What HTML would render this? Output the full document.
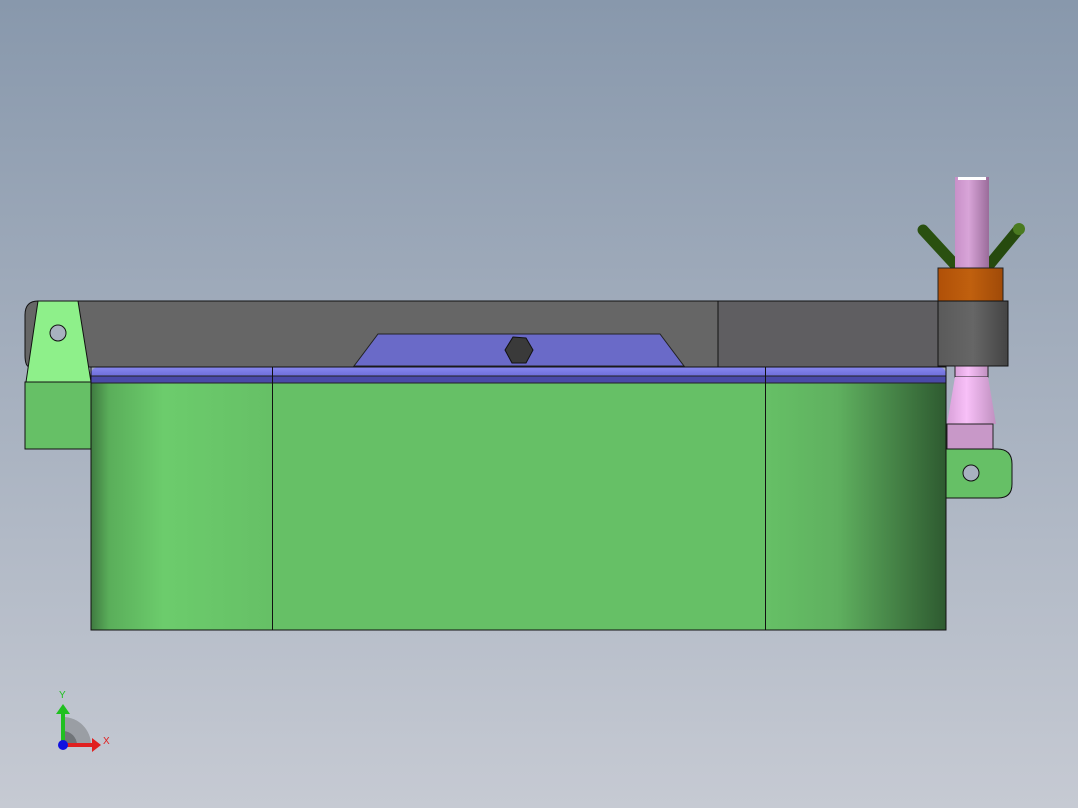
<!DOCTYPE html>
<html><head><style>html,body{margin:0;padding:0}body{width:1078px;height:808px;overflow:hidden}svg{display:block}</style></head><body>
<svg width="1078" height="808" xmlns="http://www.w3.org/2000/svg">
<defs>
<linearGradient id="bg" x1="0" y1="0" x2="0" y2="1"><stop offset="0" stop-color="#8898ac"/><stop offset="1" stop-color="#c6cad3"/></linearGradient>
<linearGradient id="gl" x1="0" x2="1"><stop offset="0" stop-color="#3f7a40"/><stop offset="0.1" stop-color="#5aae5a"/><stop offset="0.4" stop-color="#6ccc6c"/><stop offset="1" stop-color="#66c066"/></linearGradient>
<linearGradient id="gr" x1="0" x2="1"><stop offset="0" stop-color="#66c066"/><stop offset="0.4" stop-color="#5fb05f"/><stop offset="1" stop-color="#2e5a30"/></linearGradient>
<linearGradient id="pk" x1="0" x2="1"><stop offset="0" stop-color="#c890c8"/><stop offset="0.4" stop-color="#d8a4d8"/><stop offset="1" stop-color="#9a6c9a"/></linearGradient>
<linearGradient id="pk2" x1="0" x2="1"><stop offset="0" stop-color="#d8a0d8"/><stop offset="0.4" stop-color="#f8c0f8"/><stop offset="1" stop-color="#c090c0"/></linearGradient>
<linearGradient id="or" x1="0" x2="1"><stop offset="0" stop-color="#b05008"/><stop offset="0.5" stop-color="#c0600e"/><stop offset="1" stop-color="#a04a08"/></linearGradient>
<linearGradient id="cl" x1="0" x2="1"><stop offset="0" stop-color="#5a5a5a"/><stop offset="0.5" stop-color="#666"/><stop offset="1" stop-color="#444"/></linearGradient>
<linearGradient id="bl" x1="0" y1="0" x2="0" y2="1"><stop offset="0" stop-color="#8888f0"/><stop offset="1" stop-color="#5a5ac8"/></linearGradient>
</defs>
<rect width="1078" height="808" fill="url(#bg)"/>
<line x1="923" y1="230" x2="958" y2="268" stroke="#2a5010" stroke-width="11" stroke-linecap="round"/>
<line x1="1018" y1="230" x2="985" y2="270" stroke="#264a0e" stroke-width="11" stroke-linecap="round"/>
<circle cx="1019" cy="229" r="6" fill="#4a7a20"/>
<rect x="955" y="177" width="34" height="93" fill="url(#pk)"/>
<rect x="958" y="177" width="28" height="3" fill="#fff"/>
<rect x="938" y="268" width="65" height="33" fill="url(#or)" stroke="#222" stroke-width="1"/>
<path d="M38 301 H718 V367 H30 Q25 367 25 355 V315 Q25 301 38 301Z" fill="#666666" stroke="#111" stroke-width="1"/>
<rect x="718" y="301" width="220" height="66" fill="#5f5e61" stroke="#111" stroke-width="1"/>
<rect x="938" y="301" width="70" height="65" fill="url(#cl)" stroke="#111" stroke-width="1"/>
<polygon points="378,334 660,334 684,366 354,366" fill="#6a6ac8" stroke="#222" stroke-width="1"/>
<polygon points="513,337 526,338 533,350 526,363 512,363 505,350" fill="#3a3a3a" stroke="#111"/>
<polygon points="38,301 78,301 91,382 26,382" fill="#8ef08a" stroke="#111" stroke-width="1"/>
<circle cx="58" cy="333" r="8" fill="#a8b2c0" stroke="#111"/>
<rect x="25" y="382" width="66" height="67" fill="#66c066" stroke="#111" stroke-width="1"/>
<rect x="955" y="366" width="33" height="11" fill="url(#pk2)" stroke="#222" stroke-width="1"/>
<polygon points="955,377 988,377 996,424 947,424" fill="url(#pk2)"/>
<rect x="947" y="424" width="46" height="25" fill="#c898c8" stroke="#222" stroke-width="1"/>
<path d="M946 449 H997 Q1012 449 1012 464 V484 Q1012 498 998 498 H946Z" fill="#66c066" stroke="#111" stroke-width="1"/>
<circle cx="971" cy="473" r="8" fill="#a8b2c0" stroke="#111"/>
<rect x="91" y="383" width="181" height="247" fill="url(#gl)"/>
<rect x="272" y="383" width="493" height="247" fill="#66c066"/>
<rect x="765" y="383" width="181" height="247" fill="url(#gr)"/>
<path d="M91 383 V375 Q91 367 100 367 H937 Q946 367 946 375 V383Z" fill="url(#bl)"/>
<rect x="91" y="376" width="855" height="7" fill="#4a4aa8"/>
<line x1="91" y1="376" x2="946" y2="376" stroke="#222"/>
<line x1="91" y1="383" x2="946" y2="383" stroke="#222"/>
<rect x="91" y="367" width="855" height="263" fill="none" stroke="#111" stroke-width="1"/>
<line x1="272.5" y1="367" x2="272.5" y2="630" stroke="#111"/>
<line x1="765.5" y1="367" x2="765.5" y2="630" stroke="#111"/>
<path d="M63 745 V717 A28 28 0 0 1 91 745Z" fill="#9a9ea4"/>
<path d="M63 745 V731 A14 14 0 0 1 77 745Z" fill="#707478"/>
<line x1="63" y1="745" x2="63" y2="712" stroke="#20c020" stroke-width="4"/>
<polygon points="56,714 70,714 63,704" fill="#20c020"/>
<line x1="63" y1="745" x2="93" y2="745" stroke="#e02020" stroke-width="4"/>
<polygon points="92,738 92,752 101,745" fill="#e02020"/>
<circle cx="63" cy="745" r="5" fill="#1010e0"/>
<text x="59" y="698" font-family="Liberation Sans,sans-serif" font-size="10" fill="#20c020">Y</text>
<text x="103" y="744" font-family="Liberation Sans,sans-serif" font-size="10" fill="#e02020">X</text>
</svg>
</body></html>
